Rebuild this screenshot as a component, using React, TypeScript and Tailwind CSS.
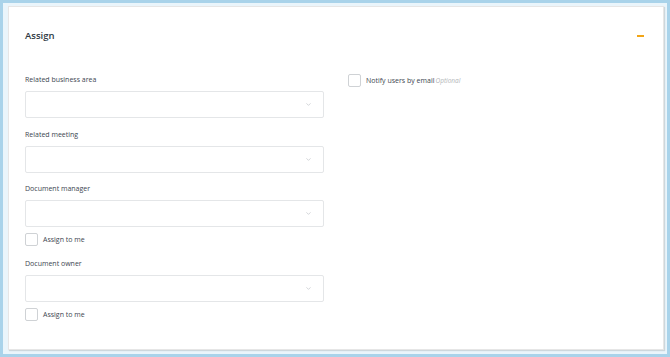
import { ChevronDown } from 'lucide-react';

function Select() {
  return (
    <div className="h-[27px] w-full border border-[#e4e6e8] rounded-[2px] bg-white flex items-center justify-end pr-[11px]">
      <ChevronDown className="w-[7px] h-[7px] text-[#b5b9bd]" strokeWidth={2} />
    </div>
  );
}

function Checkbox({ label, children }: { label: string; children?: React.ReactNode }) {
  return (
    <label className="flex items-center gap-[5px]">
      <span className="w-[13px] h-[13px] border border-[#cfd2d5] rounded-[2px] bg-white shrink-0" />
      <span className="text-[7px] leading-[10px] text-[#3c4650]">{label}</span>
      {children}
    </label>
  );
}

function Field({ label, className = '' }: { label: string; className?: string }) {
  return (
    <div className={className}>
      <div className="text-[7px] leading-[10px] text-[#3c4650] mb-[6px]">{label}</div>
      <Select />
    </div>
  );
}

export default function App() {
  return (
    <div
      className="w-[670px] h-[357px] border-[3px] border-[#a9d3ea] bg-[#eaf5fb] pl-[5px] pt-[3px] pr-[3px] pb-[4px]"
      style={{ fontFamily: '"Open Sans", "Liberation Sans", sans-serif' }}
    >
      <div className="h-full bg-white border border-[#e6e6e6] shadow-[1px_1px_1px_rgba(0,0,0,0.12)] pl-[16px] pr-[19px] pt-[22px]">
        {/* Header */}
        <div className="flex items-center justify-between h-[14px]">
          <h2 className="text-[9.5px] font-semibold text-[#2f3a44] leading-[14px]">Assign</h2>
          <span className="block w-[7px] h-[1.5px] bg-[#f2a516]" />
        </div>

        <div className="grid grid-cols-[299px_1fr] gap-x-[24px] mt-[32px]">
          {/* Left column */}
          <div>
            <Field label="Related business area" />
            <Field label="Related meeting" className="mt-[12px]" />
            <Field label="Document manager" className="mt-[11px]" />
            <div className="mt-[6px]">
              <Checkbox label="Assign to me" />
            </div>
            <Field label="Document owner" className="mt-[13px]" />
            <div className="mt-[6px]">
              <Checkbox label="Assign to me" />
            </div>
          </div>

          {/* Right column */}
          <div className="-mt-[1px]">
            <Checkbox label="Notify users by email">
              <span className="text-[6.5px] italic text-[#b4b7ba] -ml-[4px]">Optional</span>
            </Checkbox>
          </div>
        </div>
      </div>
    </div>
  );
}
